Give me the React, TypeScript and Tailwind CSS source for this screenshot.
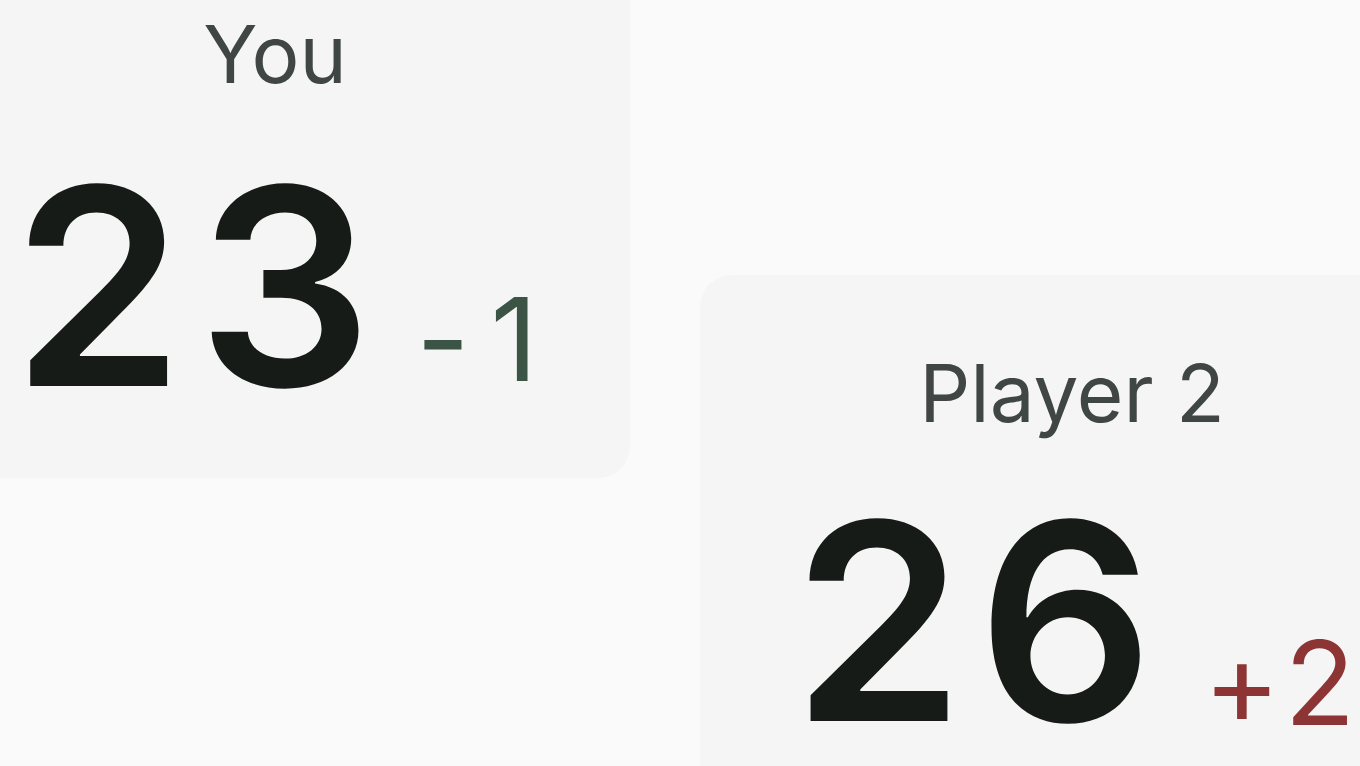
export default function App() {
  const players = [
    {
      name: "You",
      score: 23,
      delta: "-1",
      rowClass: "mt-[55px] gap-[44px]",
      deltaClass: "mb-[27px] text-[#3b5446] tracking-[0.18em] mr-[-0.18em]",
    },
    {
      name: "Player 2",
      score: 26,
      delta: "+2",
      rowClass: "mt-[51px] ml-[12px] gap-[50px]",
      deltaClass: "mb-[18px] text-[#8d3535] tracking-[0.07em]",
    },
  ];

  return (
    <div
      className="h-screen w-full overflow-hidden bg-[#fafafa]"
      style={{ fontFamily: "Inter, 'Noto Sans', sans-serif" }}
    >
      <div className="ml-[-80px] flex items-start gap-[70px]">
        {players.map((p, i) => (
          <div
            key={p.name}
            className={
              i === 0
                ? "mt-[-64px] flex h-[542px] w-[710px] shrink-0 flex-col items-center rounded-[32px] bg-[#f5f5f5] pt-[78px]"
                : "mt-[275px] flex h-[560px] w-[744px] shrink-0 flex-col items-center rounded-[32px] bg-[#f5f5f5] pt-[78px]"
            }
          >
            <div className="text-[80px] leading-none font-normal text-[#3f4643]">
              {p.name}
            </div>
            <div className={`flex items-end ${p.rowClass}`}>
              <span className="mr-[-0.05em] text-[275px] leading-none font-semibold tracking-[0.05em] text-[#161b18]">
                {p.score}
              </span>
              <span
                className={`text-[116px] leading-none font-normal ${p.deltaClass}`}
              >
                {p.delta}
              </span>
            </div>
          </div>
        ))}
      </div>
    </div>
  );
}
